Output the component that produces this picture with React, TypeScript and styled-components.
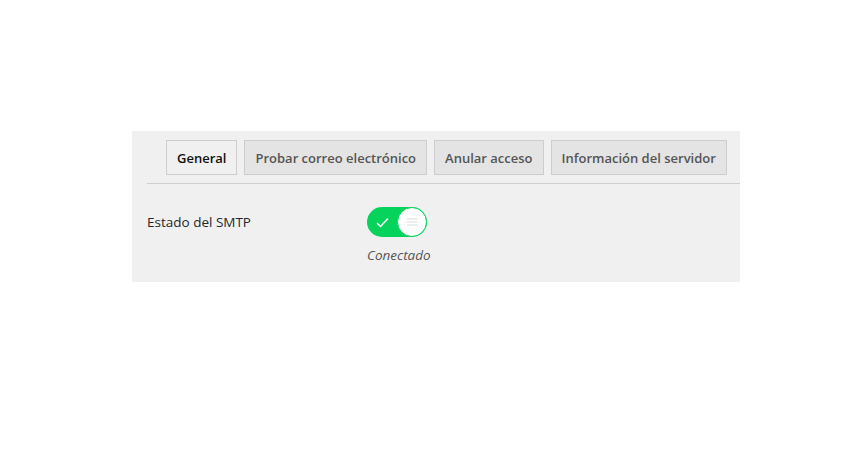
import React from 'react';
import styled, { createGlobalStyle } from 'styled-components';

const Global = createGlobalStyle`
  body {
    margin: 0;
    background: #fff;
    font-family: "Open Sans", "Noto Sans", sans-serif;
  }
`;

const Page = styled.div`
  width: 850px;
  height: 450px;
  padding: 131px 0 0 132px;
  box-sizing: border-box;
`;

const Panel = styled.div`
  width: 608px;
  height: 151px;
  background: #f0f0f0;
  padding: 9px 0 0 15px;
  box-sizing: border-box;
`;

const TabBar = styled.div`
  display: flex;
  gap: 7px;
  padding-left: 19px;
  padding-bottom: 8px;
  border-bottom: 1px solid #cfcfcf;
`;

const Tab = styled.div<{ active?: boolean }>`
  height: 35px;
  box-sizing: border-box;
  padding: 0 10px;
  display: flex;
  align-items: center;
  border: 1px solid #cdcdcd;
  background: ${p => (p.active ? '#f0f0f0' : '#e4e4e4')};
  color: ${p => (p.active ? '#111' : '#555')};
  font-size: 13px;
  font-weight: 600;
  white-space: nowrap;
`;

const Row = styled.div`
  display: flex;
  padding-top: 23px;
`;

const Label = styled.div`
  width: 220px;
  font-size: 13.5px;
  color: #23282d;
  line-height: 30px;
`;

const Field = styled.div`
  display: flex;
  flex-direction: column;
`;

const Toggle = styled.div`
  width: 60px;
  height: 30px;
  border-radius: 15px;
  background: #06d35c;
  position: relative;
  display: flex;
  align-items: center;
`;

const Check = styled.svg`
  margin-left: 9px;
`;

const Knob = styled.div`
  position: absolute;
  right: 0;
  top: 0;
  width: 30px;
  height: 30px;
  box-sizing: border-box;
  border-radius: 50%;
  background: #fff;
  border: 1px solid #06d35c;
  display: flex;
  align-items: center;
  justify-content: center;
`;

const Status = styled.div`
  margin-top: 9px;
  font-size: 13.5px;
  font-style: italic;
  color: #555;
`;

export default function App() {
  return (
    <>
      <Global />
      <Page>
        <Panel>
          <TabBar>
            <Tab active>General</Tab>
            <Tab>Probar correo electrónico</Tab>
            <Tab>Anular acceso</Tab>
            <Tab>Información del servidor</Tab>
          </TabBar>
          <Row>
            <Label>Estado del SMTP</Label>
            <Field>
              <Toggle>
                <Check width="13" height="11" viewBox="0 0 13 11">
                  <path d="M1 6l3.5 3.5L12 1.5" fill="none" stroke="#fff" strokeWidth="1.5" />
                </Check>
                <Knob>
                  <svg width="12" height="10" viewBox="0 0 12 10">
                    <path d="M1 2h10M1 5h10M1 8h10" stroke="#dcdcdc" strokeWidth="1.2" />
                  </svg>
                </Knob>
              </Toggle>
              <Status>Conectado</Status>
            </Field>
          </Row>
        </Panel>
      </Page>
    </>
  );
}
